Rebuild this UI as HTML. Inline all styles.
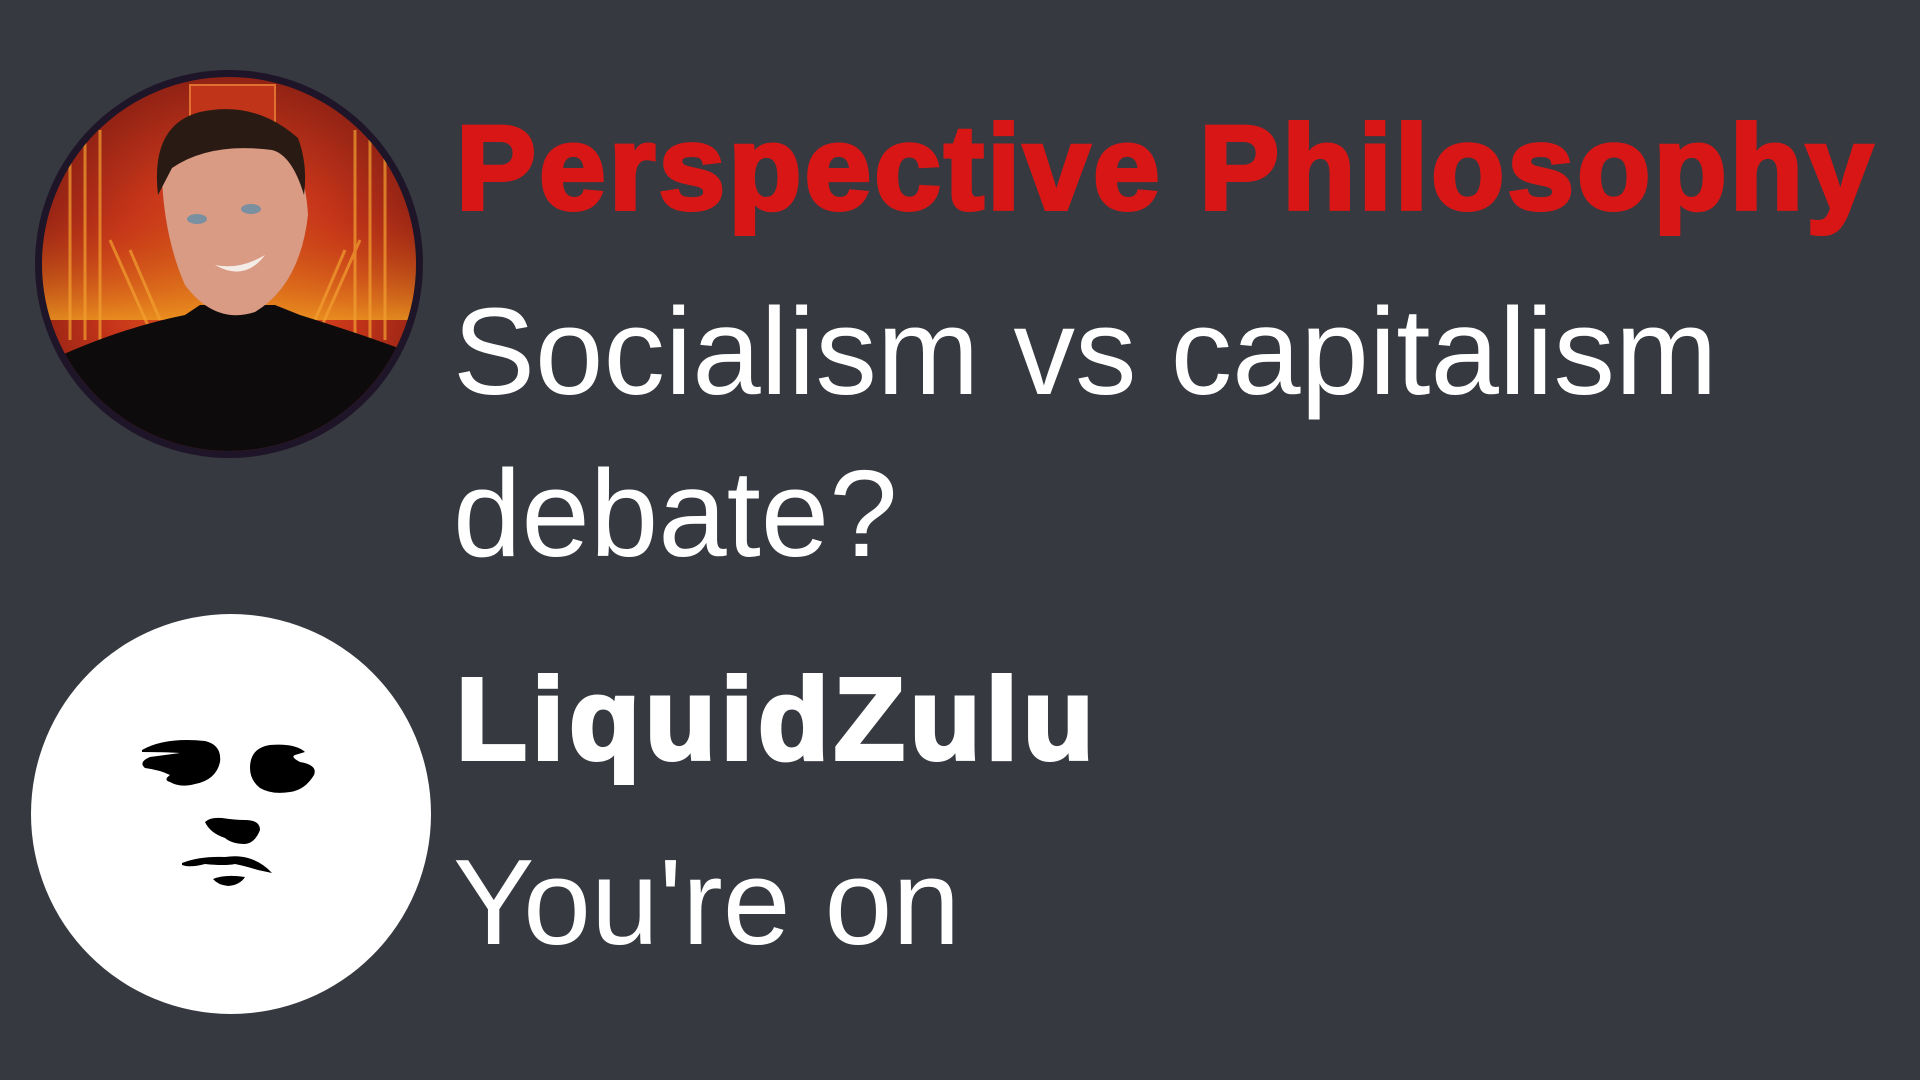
<!DOCTYPE html>
<html><head><meta charset="utf-8"><style>
html,body{margin:0;padding:0}
body{width:1920px;height:1080px;background:#36393f;position:relative;overflow:hidden;font-family:"Liberation Sans",sans-serif}
.t{position:absolute;line-height:1;white-space:nowrap;color:#fff}
</style></head><body>
<svg width="1920" height="1080" style="position:absolute;left:0;top:0">
<defs>
<radialGradient id="bg" cx="0.5" cy="0.55" r="0.6">
<stop offset="0" stop-color="#e0661a"/><stop offset="0.5" stop-color="#c8361a"/><stop offset="1" stop-color="#7a1a12"/>
</radialGradient>
<linearGradient id="low" x1="0" y1="0" x2="0" y2="1">
<stop offset="0" stop-color="#b5260f" stop-opacity="0"/><stop offset="1" stop-color="#f0a020" stop-opacity="0.8"/>
</linearGradient>
<clipPath id="c1"><circle cx="229" cy="264" r="187"/></clipPath>
</defs>
<circle cx="229" cy="264" r="194" fill="#1f1528"/>
<g clip-path="url(#c1)">
<rect x="30" y="60" width="400" height="420" fill="url(#bg)"/>
<rect x="30" y="200" width="400" height="120" fill="url(#low)"/>
<g stroke="#f2a030" stroke-width="3" opacity="0.7">
<line x1="70" y1="150" x2="70" y2="340"/><line x1="85" y1="140" x2="85" y2="340"/><line x1="100" y1="130" x2="100" y2="340"/>
<line x1="370" y1="140" x2="370" y2="340"/><line x1="385" y1="150" x2="385" y2="340"/><line x1="355" y1="130" x2="355" y2="340"/>
<line x1="110" y1="240" x2="150" y2="330"/><line x1="130" y1="250" x2="160" y2="320"/>
<line x1="360" y1="240" x2="320" y2="330"/><line x1="345" y1="250" x2="315" y2="320"/>
</g>
<rect x="190" y="85" width="85" height="40" fill="#c0341a" stroke="#e07030" stroke-width="2"/>
<path d="M30 480 L30 370 Q110 330 185 315 L200 305 L275 305 L300 315 Q380 340 430 360 L430 480 Z" fill="#0d0b0c"/>
<path d="M162 180 Q165 240 185 285 Q215 325 255 312 Q300 285 308 215 Q305 165 285 150 Q230 135 172 152 Z" fill="#d99b84"/>
<path d="M158 195 Q150 125 200 112 Q255 100 298 138 Q308 165 304 195 Q292 155 272 150 Q210 142 172 168 Z" fill="#2a1a14"/>
<ellipse cx="197" cy="219" rx="10" ry="5" fill="#7a8fa0"/><ellipse cx="251" cy="209" rx="10" ry="5" fill="#7a8fa0"/>
<path d="M215 265 Q240 270 265 255 Q245 282 215 265 Z" fill="#f4ece6"/>
</g>
<circle cx="231" cy="814" r="200" fill="#fff"/>
<path d="M142 750 Q165 737 205 741 Q222 745 220 762 Q216 780 195 784 Q180 788 170 782 Q163 780 170 775 Q160 770 145 768 Q138 762 150 757 L180 753 Q165 752 142 752 Z" fill="#000"/>
<path d="M250 768 Q250 748 270 745 Q295 743 305 752 L295 755 Q290 757 300 762 Q318 765 314 775 Q305 790 290 792 Q272 795 260 788 Q250 780 250 768 Z" fill="#000"/>
<path d="M205 822 Q210 817 222 818 Q235 820 245 820 Q260 820 260 830 Q255 843 245 844 Q232 844 225 838 Q210 833 205 822 Z" fill="#000"/>
<path d="M182 863 Q200 856 225 857 Q238 855 248 858 Q262 862 272 873 L258 870 Q245 866 235 864 Q225 866 205 864 Q190 868 182 865 Z" fill="#000"/>
<path d="M213 879 Q225 874 245 877 Q240 885 228 886 Q218 885 213 879 Z" fill="#000"/>
</svg>
<div class="t" style="left:456px;top:108px;font-size:120px;font-weight:bold;color:#d91616;letter-spacing:3px;-webkit-text-stroke:4px #d91616">Perspective Philosophy</div>
<div class="t" style="left:453px;top:291px;font-size:123px">Socialism vs capitalism</div>
<div class="t" style="left:453px;top:453px;font-size:123px">debate?</div>
<div class="t" style="left:456px;top:661px;font-size:116px;font-weight:bold;letter-spacing:5px;-webkit-text-stroke:4px #fff">LiquidZulu</div>
<div class="t" style="left:453px;top:841px;font-size:122px">You're on</div>
</body></html>
